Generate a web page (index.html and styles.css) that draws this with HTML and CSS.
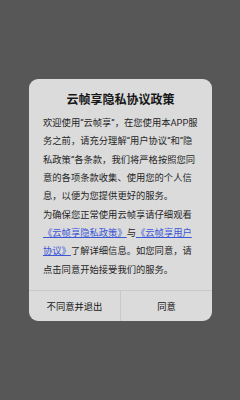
FILE: index.html
```html
<!DOCTYPE html>
<html lang="zh-CN">
<head>
<meta charset="utf-8">
<title>云帧享隐私协议政策</title>
<link rel="stylesheet" href="styles.css">
</head>
<body>
<div class="overlay">
  <div class="dialog">
    <div class="content">
      <h1 class="title">云帧享隐私协议政策</h1>
      <p class="para">欢迎使用“云帧享”，在您使用本APP服务之前，请充分理解“用户协议”和“隐私政策”各条款，我们将严格按照您同意的各项条款收集、使用您的个人信息，以便为您提供更好的服务。</p>
      <p class="para">为确保您正常使用云帧享请仔细观看<a class="link" href="#">《云帧享隐私政策》</a>与<a class="link" href="#">《云帧享用户协议》</a>了解详细信息。如您同意，请点击同意开始接受我们的服务。</p>
    </div>
    <div class="actions">
      <button class="btn">不同意并退出</button>
      <button class="btn btn-right">同意</button>
    </div>
  </div>
</div>
</body>
</html>
```

FILE: styles.css
```css
html, body {
  margin: 0;
  padding: 0;
}
body {
  background: #575757;
  font-family: Roboto, "Noto Sans CJK SC", sans-serif;
}
.overlay {
  height: 400px;
  display: flex;
  align-items: center;
  justify-content: center;
}
.dialog {
  width: 183px;
  background: #dbdbdb;
  border-radius: 9px;
  overflow: hidden;
  margin-left: 1px;
}
.content {
  padding: 13px 14px 11px 14px;
}
.title {
  margin: 0 0 6px;
  font-size: 12px;
  line-height: 16px;
  font-weight: bold;
  color: #161616;
  text-align: center;
}
.para {
  margin: 0;
  font-size: 9.3px;
  line-height: 18.3px;
  color: #262626;
}
.link {
  color: #3b57d6;
  text-decoration: underline;
}
.actions {
  display: flex;
  border-top: 1px solid #c9c9c9;
}
.btn {
  flex: 1;
  height: 30px;
  border: 0;
  background: transparent;
  font-family: Roboto, "Noto Sans CJK SC", sans-serif;
  font-size: 9.3px;
  color: #161616;
  padding: 0;
}
.btn-right {
  border-left: 1px solid #c9c9c9;
}
```
